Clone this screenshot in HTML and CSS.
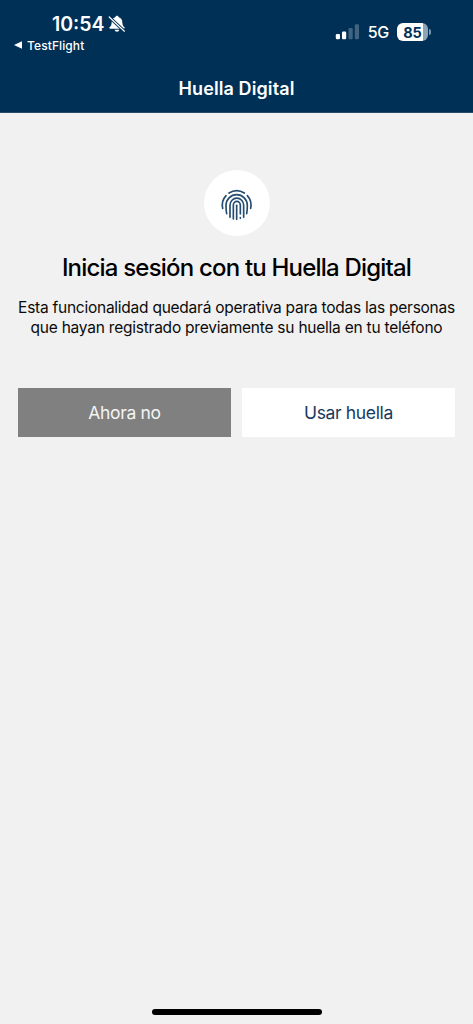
FILE: index.html
```html
<!DOCTYPE html>
<html lang="es">
<head>
<meta charset="utf-8">
<title>Huella Digital</title>
<link rel="stylesheet" href="styles.css">
</head>
<body>
<header class="top">
  <div class="status">
    <div class="status-left">
      <div class="clock"><span class="time">10:54</span>
        <svg class="bell" viewBox="0 0 18 18" width="18" height="18"><path fill="#fff" d="M9 .8c.9 0 1.500.6 1.700 1.400 2.400.7 3.600 2.500 3.600 4.700 0 3 1 4.300 2.200 5.400.5.6.1 1.500-.8 1.500H2.300c-.9 0-1.300-.9-.8-1.500C2.700 11.200 3.700 9.900 3.700 6.900c0-2.200 1.200-4 3.600-4.700C7.500 1.400 8.100.8 9 .8zM6.700 14.800h4.600c-.2 1.200-1.100 1.900-2.300 1.900s-2.100-.7-2.300-1.900z"/><path stroke="#003056" stroke-width="3.200" d="M1 1.800l15.500 14.600"/><path stroke="#fff" stroke-width="1.200" stroke-linecap="round" d="M1.200 2l15.200 14.200"/></svg>
      </div>
      <div class="back"><svg width="8" height="8" viewBox="0 0 8 8"><path fill="#fff" d="M0 4l8-3.700v7.400z"/></svg><span class="back-label">TestFlight</span></div>
    </div>
    <div class="status-right">
      <svg class="signal" width="25" height="16" viewBox="0 0 25 16"><g fill="#fff"><rect x=".8" y="10" width="4.200" height="5.200" rx="1.200"/><rect x="7" y="7.500" width="4.200" height="7.700" rx="1.200"/><g opacity=".25"><rect x="13.500" y="4" width="4.200" height="11.200" rx="1.200"/><rect x="19.800" y=".3" width="4.200" height="14.900" rx="1.200"/></g></g></svg>
      <span class="network">5G</span>
      <div class="battery"><span class="level">85</span></div><i class="battery-tip"></i>
    </div>
  </div>
  <h1 class="title"><span>Huella Digital</span></h1>
</header>
<main class="content">
  <div class="badge">
    <svg width="40" height="40" viewBox="0 0 120 120" fill="none" stroke="#254c70" stroke-width="5" stroke-linecap="round">
      <path d="M39 24A43 43 0 0 1 85 24M30 32A43 43 0 0 0 20 70M94 32A43 43 0 0 1 104 70"/>
      <path d="M32 86Q30 78 30 61A32 32 0 0 1 94 61Q94 78 92 86"/>
      <path d="M42 97V61A20.500 21.500 0 0 1 83 61V97"/>
      <path d="M52 102V61A10.500 12 0 0 1 73 61V87M73 98V100"/>
      <path d="M62 103V61"/>
    </svg>
  </div>
  <h2 class="heading"><span>Inicia sesión con tu Huella Digital</span></h2>
  <p class="copy"><span class="line1">Esta funcionalidad quedará operativa para todas las personas</span><br><span class="line2">que hayan registrado previamente su huella en tu teléfono</span></p>
  <div class="actions">
    <button class="btn later"><span>Ahora no</span></button>
    <button class="btn use"><span>Usar huella</span></button>
  </div>
</main>
<footer class="home"><div class="home-bar"></div></footer>
</body>
</html>
```
FILE: styles.css
```css
* { box-sizing: border-box; }
body {
  margin: 0;
  height: 1024px;
  display: flex;
  flex-direction: column;
  background: #f1f1f1;
  font-family: Inter, "Liberation Sans", sans-serif;
  color: #0b0b0b;
  overflow: hidden;
}
.top { height: 113px; background: #003056; color: #fff; border-bottom: 1px solid #274d6c; }
.status { height: 64px; display: flex; justify-content: space-between; padding: 13px 42px 0 14px; }
.clock { display: flex; align-items: center; height: 22px; padding-left: 38px; gap: 3px; }
.time { font-size: 19.5px; font-weight: 600; letter-spacing: 0; width: 53px; white-space: nowrap; }
.back { display: flex; align-items: center; height: 20px; gap: 5px; }
.back-label { font-size: 12px; font-weight: 500; letter-spacing: 0.1px; }
.status-right { display: flex; align-items: center; height: 38px; }
.network { font-size: 16px; font-weight: 500; margin: 0 8px; letter-spacing: -0.3px; }
.battery {
  width: 31px; height: 18px; border-radius: 6px;
  display: flex; align-items: center; justify-content: center;
  background: linear-gradient(to right, #fff 26px, #8da4b7 26px);
  color: #003056;
}
.level { font-size: 14.5px; font-weight: 700; }
.battery-tip { width: 2px; height: 6px; margin-left: 1px; border-radius: 0 2px 2px 0; background: #7f98ac; }
.title { margin: 0; height: 49px; display: flex; align-items: center; justify-content: center; font-size: 18px; font-weight: 600; letter-spacing: 0.1px; }
.content { flex: 1; padding: 57px 18px 0; display: flex; flex-direction: column; align-items: center; }
.badge { width: 66px; height: 66px; border-radius: 50%; background: #fff; display: flex; align-items: center; justify-content: center; padding-top: 3px; padding-right: 1px; }
.heading { margin: 16px 0 0; font-size: 24px; line-height: 32px; font-weight: 500; letter-spacing: -0.8px; white-space: nowrap; color: #000; }
.copy { margin: 14px 0 0; font-size: 15.5px; line-height: 20px; letter-spacing: -0.25px; text-align: center; white-space: nowrap; }
.line2 { letter-spacing: -0.23px; }
.actions { align-self: stretch; display: grid; grid-template-columns: 1fr 1fr; gap: 11px; margin-top: 50px; }
.btn { height: 49px; border: 0; padding: 0; font: 400 17.5px Inter, "Liberation Sans", sans-serif; letter-spacing: -0.35px; }
.later { background: #808080; color: #f4f4f4; }
.use { background: #fff; color: #173a60; }
.home { height: 24px; display: flex; justify-content: center; padding-top: 9px; }
.home-bar { width: 170px; height: 6px; border-radius: 3px; background: #000; }
```
